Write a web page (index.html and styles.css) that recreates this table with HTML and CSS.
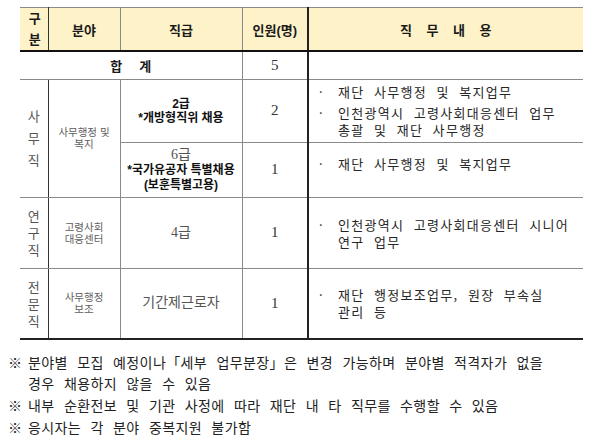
FILE: index.html
```html
<!DOCTYPE html>
<html lang="ko">
<head>
<meta charset="utf-8">
<title>채용 분야</title>
<link rel="stylesheet" href="styles.css">
</head>
<body>
<div class="page">
  <table class="jobs">
    <colgroup>
      <col class="w-gubun">
      <col class="w-field">
      <col class="w-grade">
      <col class="w-count">
      <col class="w-duty">
    </colgroup>
    <thead>
      <tr class="head">
        <th class="gubun">구<br>분</th>
        <th class="field-h">분야</th>
        <th class="grade-h">직급</th>
        <th class="count-h">인원(명)</th>
        <th class="duty-h">직무내용</th>
      </tr>
    </thead>
    <tbody>
      <tr class="row-total">
        <td colspan="3" class="total-label">합계</td>
        <td class="num">5</td>
        <td class="duty"></td>
      </tr>
      <tr class="row-a">
        <td rowspan="2" class="vert vert-wide">사<br>무<br>직</td>
        <td rowspan="2" class="field">사무행정 및<br>복지</td>
        <td class="grade bold">2급<br>*개방형직위 채용</td>
        <td class="num">2</td>
        <td class="duty">
          <ul class="items">
            <li><span class="dot">·</span><span class="txt"><span class="line">재단 사무행정 및 복지업무</span></span></li>
            <li><span class="dot">·</span><span class="txt"><span class="line">인천광역시 고령사회대응센터 업무</span><span class="line">총괄 및 재단 사무행정</span></span></li>
          </ul>
        </td>
      </tr>
      <tr class="row-b">
        <td class="grade"><span class="plain">6급</span><br><span class="bold-line">*국가유공자 특별채용<br>(보훈특별고용)</span></td>
        <td class="num">1</td>
        <td class="duty duty-up">
          <ul class="items">
            <li><span class="dot">·</span><span class="txt"><span class="line">재단 사무행정 및 복지업무</span></span></li>
          </ul>
        </td>
      </tr>
      <tr class="row-c">
        <td class="vert">연<br>구<br>직</td>
        <td class="field">고령사회<br>대응센터</td>
        <td class="grade plain">4급</td>
        <td class="num">1</td>
        <td class="duty">
          <ul class="items">
            <li><span class="dot">·</span><span class="txt"><span class="line">인천광역시 고령사회대응센터 시니어</span><span class="line">연구 업무</span></span></li>
          </ul>
        </td>
      </tr>
      <tr class="row-d">
        <td class="vert">전<br>문<br>직</td>
        <td class="field">사무행정<br>보조</td>
        <td class="grade plain">기간제근로자</td>
        <td class="num">1</td>
        <td class="duty">
          <ul class="items">
            <li><span class="dot">·</span><span class="txt"><span class="line">재단 행정보조업무, 원장 부속실</span><span class="line">관리 등</span></span></li>
          </ul>
        </td>
      </tr>
    </tbody>
  </table>

  <ul class="notes">
    <li><span class="mark">※</span><span class="note-txt">분야별 모집 예정이나「세부 업무분장」은 변경 가능하며 분야별 적격자가 없을<br>경우 채용하지 않을 수 있음</span></li>
    <li><span class="mark">※</span><span class="note-txt">내부 순환전보 및 기관 사정에 따라 재단 내 타 직무를 수행할 수 있음</span></li>
    <li><span class="mark">※</span><span class="note-txt">응시자는 각 분야 중복지원 불가함</span></li>
  </ul>
</div>
</body>
</html>
```
FILE: styles.css
```css
html, body {
  margin: 0;
  padding: 0;
  background: #ffffff;
}

body {
  font-family: "Liberation Serif", "Noto Sans CJK KR", serif;
  color: #222222;
  width: 592px;
  height: 441px;
  overflow: hidden;
}

.page {
  padding: 7px 9px 0 8px;
}

.jobs {
  margin-left: 12px;
  width: 563px;
  border-collapse: collapse;
  table-layout: fixed;
  border-top: 1px solid #555555;
  border-bottom: 2px solid #222222;
}

.w-gubun { width: 28px; }
.w-field { width: 72px; }
.w-grade { width: 122px; }
.w-count { width: 66px; }
.w-duty { width: 275px; }

.jobs th,
.jobs td {
  padding: 0;
  text-align: center;
  vertical-align: middle;
  border-top: 1px solid #8a8a8a;
  border-bottom: 1px solid #8a8a8a;
  border-left: 1px solid #8a8a8a;
  word-break: keep-all;
}

.jobs th:first-child,
.jobs td.vert,
.jobs td.total-label {
  border-left: none;
}

.jobs td.vert,
.jobs th.gubun {
  border-right: 1px solid #333333;
}

.jobs td.duty,
.jobs th.duty-h {
  border-left: 2px solid #222222;
  border-right: none;
}

/* header */
.head {
  height: 43px;
  background: #fdf2c8;
}

.jobs .head th {
  font-family: "Liberation Sans", "Noto Sans CJK KR", sans-serif;
  font-weight: 700;
  font-size: 13px;
  color: #1a1a1a;
  border-bottom: 2px solid #111111;
}

.jobs .head th.gubun {
  line-height: 21px;
  padding-left: 2px;
}

.jobs .head th.duty-h {
  text-align: center;
  letter-spacing: 14.6px;
  padding-left: 14px;
}

/* rows */
.row-total { height: 28px; }
.row-a { height: 63px; }
.row-b { height: 55px; }
.row-c { height: 71px; }
.row-d { height: 71px; }

.jobs td.total-label {
  font-family: "Liberation Sans", "Noto Sans CJK KR", sans-serif;
  font-weight: 700;
  font-size: 13px;
  letter-spacing: 17px;
  padding-left: 17px;
  color: #1a1a1a;
}

.num {
  font-size: 15px;
  color: #333333;
}

.vert {
  font-family: "Noto Sans CJK KR", sans-serif;
  font-size: 13px;
  line-height: 17px;
  color: #555555;
}

.jobs td.vert-wide {
  line-height: 22px;
}

.field {
  font-family: "Noto Sans CJK KR", sans-serif;
  font-size: 10.5px;
  line-height: 12px;
  color: #5e5e5e;
}

.grade {
  font-family: "Liberation Sans", "Noto Sans CJK KR", sans-serif;
  font-size: 12px;
  line-height: 14px;
  color: #111111;
}

.grade.bold,
.bold-line {
  font-weight: 700;
}

.jobs .row-b .grade {
  line-height: 15px;
}

.plain {
  font-family: "Liberation Serif", "Noto Sans CJK KR", serif;
  font-weight: 400;
  font-size: 14px;
  color: #555555;
}

.jobs td.duty {
  font-family: "Noto Sans CJK KR", sans-serif;
  font-size: 13px;
  line-height: 17px;
  color: #262626;
  letter-spacing: 1.3px;
  word-spacing: 4.5px;
  text-align: left;
  padding-left: 10px;
  padding-right: 8px;
}

.jobs td.duty-up {
  padding-bottom: 12px;
}

.items {
  list-style: none;
  margin: 0;
  padding: 0;
}

.items li {
  display: flex;
  margin-bottom: 4px;
}

.items li:last-child {
  margin-bottom: 0;
}

.dot {
  flex: none;
  width: 19px;
}

.txt {
  flex: 1;
  display: block;
}

.line {
  display: block;
  white-space: nowrap;
}

/* notes */
.notes {
  list-style: none;
  margin: 12px 0 0 0;
  padding: 0;
  font-family: "Noto Sans CJK KR", sans-serif;
  font-size: 14px;
  line-height: 21px;
  color: #222222;
  letter-spacing: 0.4px;
  word-spacing: 5px;
}

.notes li {
  display: flex;
  margin-bottom: 1px;
}

.mark {
  flex: none;
  width: 20px;
  word-spacing: 0;
  letter-spacing: 0;
}

.note-txt {
  white-space: nowrap;
}
```
